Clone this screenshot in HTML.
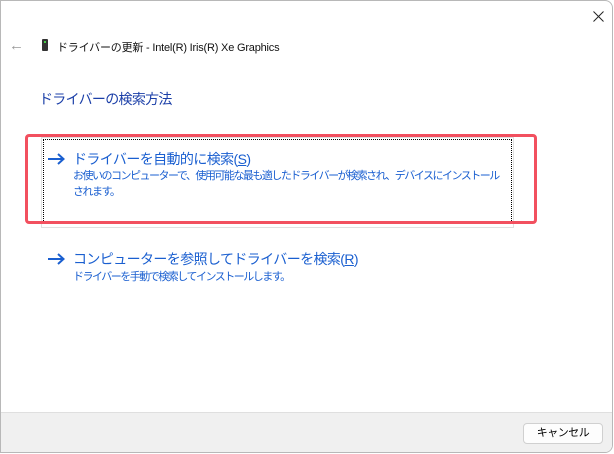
<!DOCTYPE html>
<html><head><meta charset="utf-8"><style>
*{margin:0;padding:0;box-sizing:border-box}
body{width:614px;height:454px;background:#fff;position:relative;overflow:hidden;font-family:"Liberation Sans","Noto Sans CJK JP",sans-serif}
.win{position:absolute;left:0;top:0;width:613px;height:453px;border:1px solid #b8b8b8;border-radius:0 8px 8px 0;background:#fff;overflow:hidden}
.abs{position:absolute;white-space:nowrap}
.foot{position:absolute;left:0;right:0;top:411px;bottom:0;background:#f0f0f0;border-top:1px solid #dfdfdf}
.btn{position:absolute;left:522px;top:422px;width:80px;height:21px;background:#fdfdfd;border:1px solid #d0d0d0;border-radius:4px;font-size:11px;text-align:center;line-height:19px;color:#000;letter-spacing:-0.5px}
.lnk{color:#1a5fd0;font-size:14px;letter-spacing:-0.6px}
.desc{color:#1a5fd0;font-size:11px;line-height:16px;letter-spacing:-1.5px}
</style></head><body>
<div class="win">
<div class="abs" style="left:8px;top:36px;color:#999;font-size:15px">&#8592;</div>
<div class="abs" style="left:41px;top:38px;width:6px;height:12px;background:#333;border-radius:1px"><div style="position:absolute;left:2px;top:2px;width:2px;height:2px;background:#4c4"></div></div>
<div class="abs" style="left:56px;top:38px;font-size:11px;color:#111;letter-spacing:-0.2px">ドライバーの更新 - Intel(R) Iris(R) Xe Graphics</div>
<svg class="abs" style="left:592px;top:10px" width="11" height="11"><path d="M0.5 0.5L10.5 10.5M10.5 0.5L0.5 10.5" stroke="#222" stroke-width="1"/></svg>
<div class="abs" style="left:38px;top:88px;font-size:14px;color:#1b3fa8;letter-spacing:-0.7px">ドライバーの検索方法</div>
<div class="abs" style="left:40px;top:136px;width:473px;height:91px;border:1px solid #e0e0e0"></div>
<div class="abs" style="left:42px;top:138px;width:469px;height:84px;border:1px dotted #000"></div>
<div class="abs" style="left:24px;top:133px;width:512px;height:90px;border:3px solid #f2505f;border-radius:4px"></div>
<svg class="abs" style="left:47px;top:152px" width="17" height="12"><path d="M0 6H15M10 1L15.5 6L10 11" stroke="#1a5fd0" stroke-width="2" fill="none"/></svg>
<div class="abs lnk" style="left:72px;top:148px">ドライバーを自動的に検索(<u>S</u>)</div>
<div class="abs desc" style="left:72px;top:167px">お使いのコンピューターで、使用可能な最も適したドライバーが検索され、デバイスにインストール<br>されます。</div>
<svg class="abs" style="left:47px;top:252px" width="17" height="12"><path d="M0 6H15M10 1L15.5 6L10 11" stroke="#1a5fd0" stroke-width="2" fill="none"/></svg>
<div class="abs lnk" style="left:72px;top:248px">コンピューターを参照してドライバーを検索(<u>R</u>)</div>
<div class="abs desc" style="left:72px;top:268px">ドライバーを手動で検索してインストールします。</div>
<div class="foot"></div>
<div class="btn">キャンセル</div>
</div>
</body></html>
